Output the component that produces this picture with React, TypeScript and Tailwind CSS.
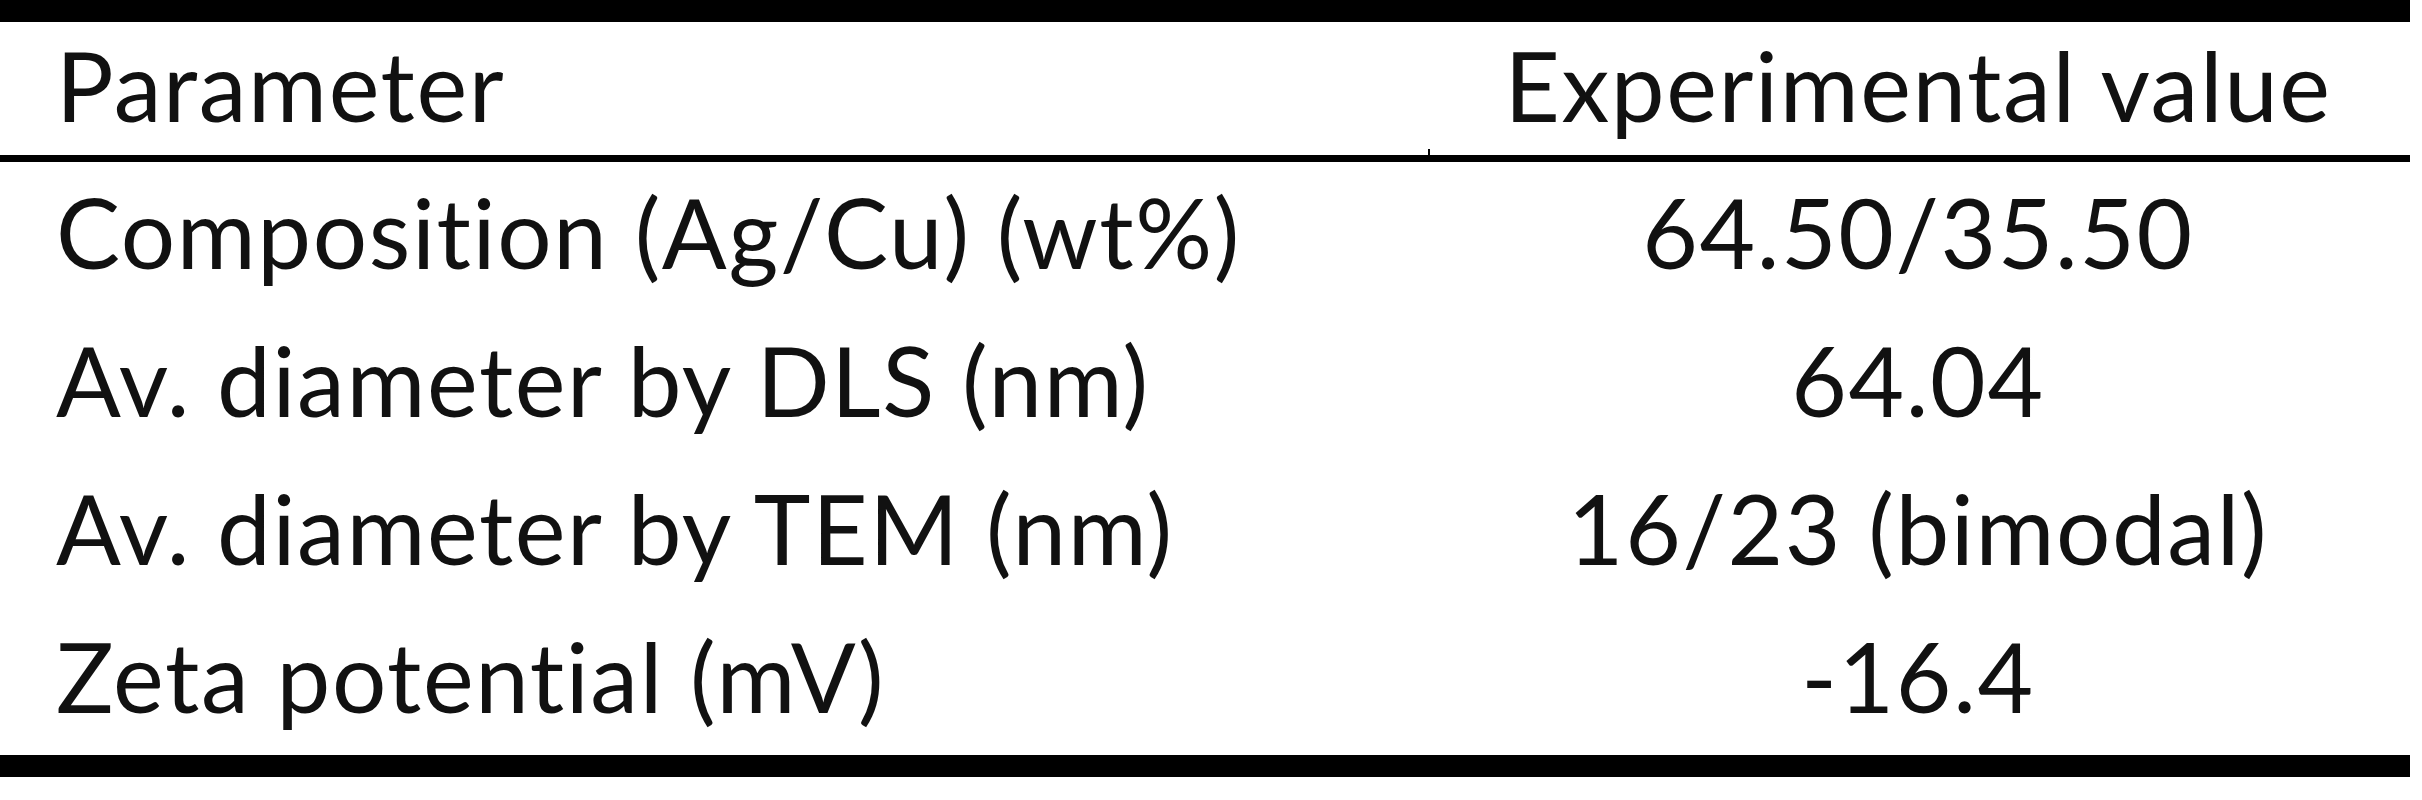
import React from "react";

const rows = [
  { name: "Composition (Ag/Cu) (wt%)", value: "64.50/35.50" },
  { name: "Av. diameter by DLS (nm)", value: "64.04" },
  { name: "Av. diameter by TEM (nm)", value: "16/23 (bimodal)" },
  { name: "Zeta potential (mV)", value: "-16.4" },
];

const App = () => {
  return (
    <div className="w-[2422px] h-[800px] bg-white text-[#111] font-['Lato',sans-serif] text-[96px] tracking-[1.6px] [font-variant-ligatures:none]">
      <div className="w-[2410px]">
        <div className="h-[22px] bg-black" />

        <div className="grid grid-cols-[1426px_1fr] h-[133px] leading-[126px] whitespace-nowrap">
          <div className="pl-[56px]">Parameter</div>
          <div className="text-center">Experimental value</div>
        </div>

        <div className="relative h-[7px] bg-black">
          <span className="absolute left-[1428px] -top-[6px] h-[6px] w-[2px] bg-black" />
        </div>

        {rows.map((row, i) => (
          <div
            key={row.name}
            className={`grid grid-cols-[1426px_1fr] leading-[140px] whitespace-nowrap ${i === 3 ? "h-[149px]" : "h-[148px]"}`}
          >
            <div className="pl-[56px]">{row.name}</div>
            <div className="text-center">{row.value}</div>
          </div>
        ))}

        <div className="h-[22px] bg-black" />
      </div>
    </div>
  );
};

export default App;
